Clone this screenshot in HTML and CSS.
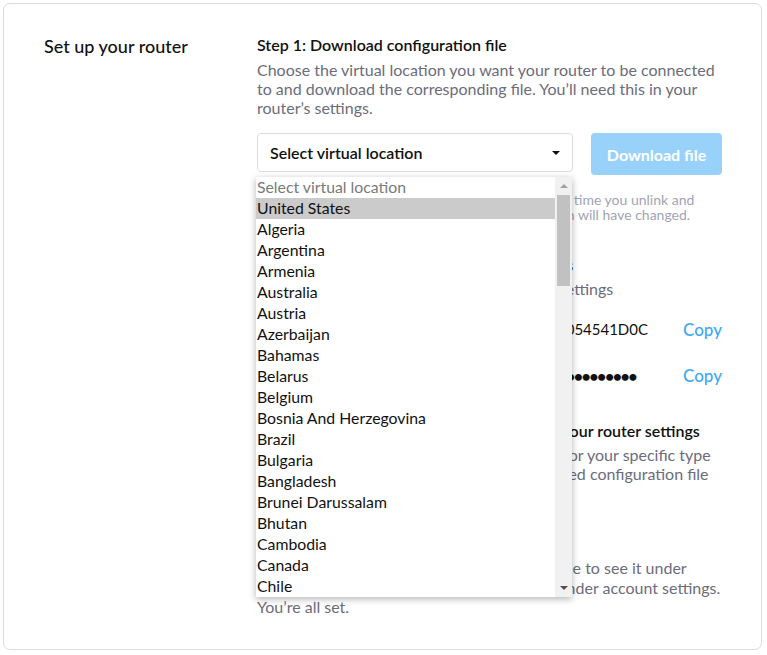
FILE: index.html
```html
<!DOCTYPE html>
<html lang="en">
<head>
<meta charset="utf-8">
<title>Set up your router</title>
<link rel="stylesheet" href="styles.css">
</head>
<body>
<div class="card">
  <h2 class="side-title">Set up your router</h2>
  <div class="steps">
    <section class="step">
      <h3 class="step-title">Step 1: Download configuration file</h3>
      <p class="step-text">Choose the virtual location you want your router to be connected to and download the corresponding file. You’ll need this in your router’s settings.</p>
      <div class="actions">
        <div class="select-wrap">
          <div class="select">
            <span>Select virtual location</span>
            <span class="caret"></span>
          </div>
          <div class="dropdown">
            <ul class="options">
              <li class="placeholder">Select virtual location</li>
              <li class="active">United States</li>
              <li>Algeria</li>
              <li>Argentina</li>
              <li>Armenia</li>
              <li>Australia</li>
              <li>Austria</li>
              <li>Azerbaijan</li>
              <li>Bahamas</li>
              <li>Belarus</li>
              <li>Belgium</li>
              <li>Bosnia And Herzegovina</li>
              <li>Brazil</li>
              <li>Bulgaria</li>
              <li>Bangladesh</li>
              <li>Brunei Darussalam</li>
              <li>Bhutan</li>
              <li>Cambodia</li>
              <li>Canada</li>
              <li>Chile</li>
            </ul>
            <div class="scrollbar">
              <span class="arrow up"></span>
              <span class="thumb"></span>
              <span class="arrow down"></span>
            </div>
          </div>
        </div>
        <button class="download">Download file</button>
      </div>
      <p class="note">Note that the configuration file is regenerated each time you unlink and relink your router, which means your virtual location will have changed.</p>
    </section>

    <section class="step step2">
      <h3 class="step-title">Step 2: Copy your router’s unique credentials</h3>
      <p class="step-text">Enter these login credentials in your router settings</p>
      <div class="cred">
        <span class="cred-label">Username</span>
        <span class="cred-value">7A9C3F12E8054541D0C</span>
        <span class="copy">Copy</span>
      </div>
      <div class="cred">
        <span class="cred-label">Password</span>
        <span class="cred-value dots">••••••••••••••••••••••••••••••••••</span>
        <span class="copy">Copy</span>
      </div>
    </section>

    <section class="step step3">
      <h3 class="step-title">Step 3: Add the VPN file and credentials to your router settings</h3>
      <p class="step-text">Follow the setup instructions in our manual for your specific type of router, then upload and use the downloaded configuration file</p>
      <p class="step-link">See setup guides</p>
    </section>

    <section class="step step4">
      <h3 class="step-title">Step 4: Check your router</h3>
      <p class="step-text">Wait for your routers to become fully available to see it under <span class="link">Devices page</span> in the Linked routers section under account settings. You’re all set.</p>
    </section>
  </div>
</div>
</body>
</html>
```
FILE: styles.css
```css
* { box-sizing: border-box; }
html, body { margin: 0; padding: 0; background: #fff; }
body {
  padding: 3px 5px 5px 3px;
  font-family: "Lato", "Liberation Sans", sans-serif;
  color: #1c1c24;
}
.card {
  width: 759px;
  height: 647px;
  border: 1px solid #dcdcdc;
  border-radius: 7px;
  display: grid;
  grid-template-columns: 213px 465px;
  padding: 31px 0 0 40px;
  overflow: hidden;
}
.side-title {
  margin: 0;
  font-size: 18px;
  font-weight: 500;
  line-height: 22px;
  color: #111;
}
.step-title {
  margin: 0;
  font-size: 16px;
  font-weight: 600;
  line-height: 20px;
  color: #111;
}
.step-text {
  margin: 5px 0 0;
  font-size: 16px;
  line-height: 19px;
  color: #6c6c7c;
}
.actions {
  display: flex;
  gap: 18px;
  margin-top: 16px;
  align-items: flex-start;
}
.select-wrap { position: relative; }
.select {
  width: 316px;
  height: 39px;
  border: 1px solid #dcdcdc;
  border-radius: 4px;
  display: flex;
  align-items: center;
  justify-content: space-between;
  padding: 0 12px 0 12px;
  font-size: 16px;
  font-weight: 600;
  color: #111;
}
.caret {
  width: 0; height: 0;
  border-left: 4px solid transparent;
  border-right: 4px solid transparent;
  border-top: 4px solid #111;
}
.download {
  width: 131px;
  height: 42px;
  border: 0;
  border-radius: 4px;
  background: #98d2fb;
  color: #fff;
  font-family: inherit;
  font-size: 16px;
  font-weight: 700;
}
.note {
  margin: 17px 0 0;
  font-size: 14px;
  line-height: 15px;
  color: #a3a3b4;
}
.step2 { margin-top: 33px; }
.step2 .step-text { margin-top: 4px; }
.cred {
  display: flex;
  align-items: center;
  height: 46px;
  font-size: 15px;
  color: #111;
}
.cred:first-of-type { margin-top: 8px; }
.cred-label { color: #6c6c7c; }
.cred-value { margin-left: auto; white-space: nowrap; }
.dots { font-size: 16px; font-weight: 700; letter-spacing: -1.5px; padding-right: 12px; }
.copy { margin-left: 35px; color: #3fa9f5; font-size: 17px; font-weight: 500; }
.step3 { margin-top: 23px; }
.step3 .step-text { margin-top: 4px; }
.step-link { margin: 14px 0 0; font-size: 16px; line-height: 19px; color: #3fa9f5; }
.step4 { margin-top: 17px; }
.step4 .step-text { line-height: 19.5px; }
.link { color: #3fa9f5; }

/* opened dropdown */
.dropdown {
  position: absolute;
  top: 44px;
  left: -1px;
  width: 316px;
  height: 420px;
  background: #fff;
  box-shadow: 0 2px 7px rgba(0,0,0,0.3);
  display: flex;
  z-index: 5;
}
.options {
  list-style: none;
  margin: 0;
  padding: 0;
  flex: 1;
}
.options li {
  height: 21px;
  line-height: 20px;
  padding-left: 1px;
  font-size: 15.8px;
  color: #111;
  white-space: nowrap;
}
.options .placeholder { color: #7a7a7a; }
.options .active { background: #cbcbcb; }
.scrollbar {
  width: 17px;
  background: #f1f1f1;
  display: flex;
  flex-direction: column;
  align-items: center;
}
.arrow {
  width: 0; height: 0;
  border-left: 4px solid transparent;
  border-right: 4px solid transparent;
  margin: 7px 0;
}
.arrow.up { border-bottom: 4px solid #a3a3a3; }
.arrow.down { border-top: 4px solid #505050; margin-top: auto; }
.thumb {
  width: 13px;
  height: 91px;
  background: #c1c1c1;
}
```
